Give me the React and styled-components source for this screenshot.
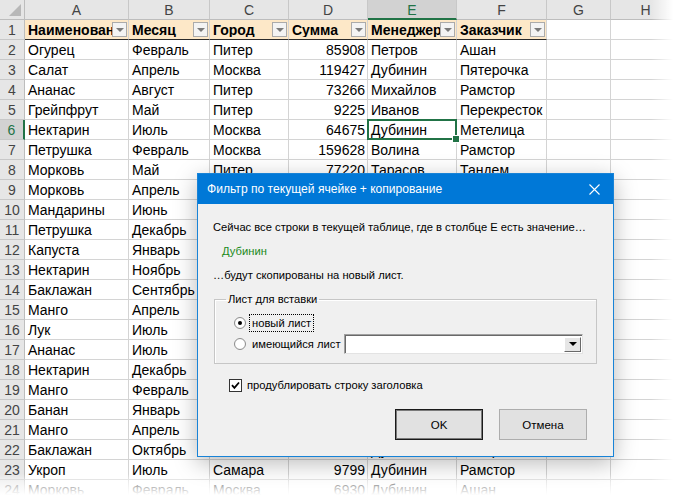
import React from 'react';
import styled, { createGlobalStyle, css } from 'styled-components';

const GlobalStyle = createGlobalStyle`
  html, body {
    margin: 0;
    padding: 0;
    background: #fff;
    overflow: hidden;
  }
`;

const COLS = [
  { key: 'A', width: 104 },
  { key: 'B', width: 81 },
  { key: 'C', width: 79 },
  { key: 'D', width: 79 },
  { key: 'E', width: 89 },
  { key: 'F', width: 90 },
  { key: 'G', width: 64 },
  { key: 'H', width: 70 },
];

const HEADERS = ['Наименование', 'Месяц', 'Город', 'Сумма', 'Менеджер', 'Заказчик'];

const ROWS = [
  ['Огурец', 'Февраль', 'Питер', 85908, 'Петров', 'Ашан'],
  ['Салат', 'Апрель', 'Москва', 119427, 'Дубинин', 'Пятерочка'],
  ['Ананас', 'Август', 'Питер', 73266, 'Михайлов', 'Рамстор'],
  ['Грейпфрут', 'Май', 'Питер', 9225, 'Иванов', 'Перекресток'],
  ['Нектарин', 'Июль', 'Москва', 64675, 'Дубинин', 'Метелица'],
  ['Петрушка', 'Февраль', 'Москва', 159628, 'Волина', 'Рамстор'],
  ['Морковь', 'Май', 'Питер', 77220, 'Тарасов', 'Тандем'],
  ['Морковь', 'Апрель', 'Москва', 43154, 'Иванов', 'Ашан'],
  ['Мандарины', 'Июнь', 'Самара', 91832, 'Петров', 'Рамстор'],
  ['Петрушка', 'Декабрь', 'Питер', 12045, 'Волина', 'Тандем'],
  ['Капуста', 'Январь', 'Москва', 66318, 'Дубинин', 'Ашан'],
  ['Нектарин', 'Ноябрь', 'Питер', 28711, 'Михайлов', 'Метелица'],
  ['Баклажан', 'Сентябрь', 'Самара', 5390, 'Тарасов', 'Пятерочка'],
  ['Манго', 'Апрель', 'Москва', 81276, 'Иванов', 'Рамстор'],
  ['Лук', 'Июль', 'Питер', 17734, 'Петров', 'Ашан'],
  ['Ананас', 'Июль', 'Москва', 54400, 'Дубинин', 'Тандем'],
  ['Нектарин', 'Декабрь', 'Самара', 38021, 'Волина', 'Перекресток'],
  ['Манго', 'Февраль', 'Питер', 7712, 'Михайлов', 'Метелица'],
  ['Банан', 'Январь', 'Москва', 99514, 'Тарасов', 'Ашан'],
  ['Манго', 'Апрель', 'Питер', 23650, 'Иванов', 'Рамстор'],
  ['Баклажан', 'Октябрь', 'Москва', 70088, 'Дубинин', 'Пятерочка'],
  ['Укроп', 'Июль', 'Самара', 9799, 'Дубинин', 'Рамстор'],
  ['Морковь', 'Февраль', 'Москва', 6930, 'Дубинин', 'Ашан'],
];

const ACTIVE_COL = 'E';
const ACTIVE_ROW = 6;

const Page = styled.div`
  position: relative;
  width: 677px;
  height: 496px;
  overflow: hidden;
  background: #fff;
`;

const Sheet = styled.div`
  display: grid;
  grid-template-columns: 25px ${COLS.map(c => `${c.width}px`).join(' ')};
  grid-auto-rows: 20px;
  font: 400 14px/1 'Liberation Sans', Arial, sans-serif;
  color: #000;
`;

const Corner = styled.div`
  position: relative;
  box-sizing: border-box;
  background: #e6e6e6;
  border-right: 1px solid #bdbdbd;
  border-bottom: 1px solid #bdbdbd;

  &::after {
    content: '';
    position: absolute;
    right: 3px;
    bottom: 3px;
    width: 0;
    height: 0;
    border-left: 12px solid transparent;
    border-bottom: 12px solid #b8b8b8;
  }
`;

const ColHead = styled.div`
  box-sizing: border-box;
  display: flex;
  align-items: center;
  justify-content: center;
  background: ${p => (p.active ? '#d2d2d2' : '#e6e6e6')};
  color: ${p => (p.active ? '#217346' : '#444')};
  border-right: 1px solid #c8c8c8;
  border-bottom: ${p => (p.active ? '2px solid #217346' : '1px solid #bdbdbd')};
  padding-top: ${p => (p.active ? '1px' : '0')};
`;

const RowHead = styled.div`
  box-sizing: border-box;
  display: flex;
  align-items: center;
  justify-content: center;
  background: ${p => (p.active ? '#d2d2d2' : '#e6e6e6')};
  color: ${p => (p.active ? '#217346' : '#444')};
  border-right: ${p => (p.active ? '2px solid #217346' : '1px solid #bdbdbd')};
  border-bottom: 1px solid #c8c8c8;
`;

const Cell = styled.div`
  position: relative;
  box-sizing: border-box;
  display: flex;
  align-items: flex-end;
  justify-content: ${p => (p.numeric ? 'flex-end' : 'flex-start')};
  padding: 0 2px 2px 3px;
  border-right: 1px solid #d4d4d4;
  border-bottom: 1px solid #d4d4d4;
  white-space: nowrap;
  overflow: ${p => (p.selected ? 'visible' : 'hidden')};

  ${p => p.header && css`
    background: #fde8c8;
    font-weight: 700;
    border-bottom: 1px solid #2b2b2b;
    align-items: center;
    padding: 0 1px 0 3px;
  `}

  ${p => p.selected && css`
    &::after {
      content: '';
      position: absolute;
      left: -1px;
      top: -1px;
      right: -1px;
      bottom: -1px;
      border: 2px solid #217346;
      z-index: 2;
    }
    &::before {
      content: '';
      position: absolute;
      right: -4px;
      bottom: -4px;
      width: 6px;
      height: 6px;
      background: #217346;
      border: 1px solid #fff;
      z-index: 3;
    }
  `}
`;

const HeaderLabel = styled.span`
  flex: 1;
  overflow: hidden;
  white-space: nowrap;
`;

const FilterButton = styled.span`
  flex: none;
  box-sizing: border-box;
  width: 15px;
  height: 15px;
  display: flex;
  align-items: center;
  justify-content: center;
  background: #f3f3f3;
  border: 1px solid #ababab;

  &::after {
    content: '';
    width: 0;
    height: 0;
    border-left: 4px solid transparent;
    border-right: 4px solid transparent;
    border-top: 4px solid #7a7a7a;
  }
`;

const FadeRight = styled.div`
  position: absolute;
  top: 0;
  right: 0;
  bottom: 0;
  width: 26px;
  background: linear-gradient(to right, rgba(255, 255, 255, 0), #fff 85%);
  pointer-events: none;
`;

const FadeBottom = styled.div`
  position: absolute;
  left: 0;
  right: 0;
  bottom: 0;
  height: 22px;
  background: linear-gradient(to bottom, rgba(255, 255, 255, 0), rgba(255, 255, 255, 0.55) 35%, #fff 95%);
  pointer-events: none;
`;

/* ---------- dialog ---------- */

const Dialog = styled.div`
  position: absolute;
  left: 197px;
  top: 173px;
  width: 417px;
  height: 284px;
  box-sizing: border-box;
  display: flex;
  flex-direction: column;
  background: #f0f0f0;
  border: 1px solid #1883d7;
  box-shadow: 0 6px 22px rgba(0, 0, 0, 0.28);
  font: 400 11.2px/14px 'Liberation Sans', Arial, sans-serif;
  color: #000;
  z-index: 5;
`;

const TitleBar = styled.div`
  flex: none;
  height: 30px;
  display: flex;
  align-items: center;
  justify-content: space-between;
  padding-left: 9px;
  background: #0078d7;
  color: #fff;
  font: 400 12.1px 'Liberation Sans', Arial, sans-serif;
`;

const CloseButton = styled.span`
  width: 38px;
  height: 30px;
  display: flex;
  align-items: center;
  justify-content: center;
`;

const Body = styled.div`
  flex: 1;
  display: flex;
  flex-direction: column;
  padding: 16px 16px 0 15px;
`;

const Line = styled.div`
  height: 14px;
  margin-bottom: 10px;
  padding-left: ${p => p.indent || 0}px;
  color: ${p => p.color || '#000'};
  white-space: nowrap;
`;

const Group = styled.fieldset`
  margin: 0 0 0 1px;
  padding: 6px 0 9px 0;
  border: 1px solid #c6c6c6;
  box-shadow: inset 1px 1px 0 #fff;
  height: 72px;
  box-sizing: border-box;
  display: flex;
  flex-direction: column;
`;

const Legend = styled.legend`
  padding: 0 2px;
  margin-left: 11px;
`;

const OptionRow = styled.div`
  height: 21px;
  display: flex;
  align-items: center;
  padding-left: 19px;
`;

const Radio = styled.span`
  flex: none;
  box-sizing: border-box;
  width: 12px;
  height: 12px;
  border-radius: 50%;
  border: 1px solid #8d8d8d;
  background: radial-gradient(circle, #fff 55%, #e6e6e6);
  display: flex;
  align-items: center;
  justify-content: center;
  margin-right: 3px;

  &::after {
    content: '';
    width: 4px;
    height: 4px;
    border-radius: 50%;
    background: ${p => (p.checked ? '#000' : 'transparent')};
  }
`;

const OptionText = styled.span`
  flex: none;
  white-space: nowrap;
  padding: 1px 2px;
  border: 1px dotted ${p => (p.focused ? '#000' : 'transparent')};
`;

const Combo = styled.div`
  flex: none;
  width: 239px;
  height: 20px;
  margin-left: auto;
  margin-right: 13px;
  box-sizing: border-box;
  display: flex;
  justify-content: flex-end;
  background: #fff;
  border: 1px solid #a0a0a0;
  border-right-color: #e3e3e3;
  border-bottom-color: #e3e3e3;
  box-shadow: inset 1px 1px 0 #696969;
  padding: 2px 1px 1px 0;
`;

const ComboButton = styled.span`
  width: 17px;
  box-sizing: border-box;
  display: flex;
  align-items: center;
  justify-content: center;
  background: #e6e6e6;
  border: 1px solid #fff;
  border-right-color: #696969;
  border-bottom-color: #696969;

  &::after {
    content: '';
    border-left: 4px solid transparent;
    border-right: 4px solid transparent;
    border-top: 4px solid #000;
  }
`;

const CheckRow = styled.div`
  display: flex;
  align-items: center;
  height: 14px;
  margin: 14px 0 0 16px;
`;

const CheckBox = styled.span`
  flex: none;
  box-sizing: border-box;
  width: 13px;
  height: 13px;
  margin-right: 5px;
  background: #fff;
  border: 1px solid #333;
  display: flex;
  align-items: center;
  justify-content: center;
`;

const Buttons = styled.div`
  display: flex;
  justify-content: flex-end;
  gap: 16px;
  margin-top: 17px;
  padding-right: 10px;
`;

const Button = styled.button`
  width: 88px;
  height: 31px;
  box-sizing: border-box;
  background: #e1e1e1;
  border: 1px solid ${p => (p.primary ? '#1a1a1a' : '#adadad')};
  box-shadow: ${p => (p.primary ? 'inset 0 0 0 1px #7a7a7a' : 'none')};
  font: 400 11.5px 'Liberation Sans', Arial, sans-serif;
  color: #000;
  padding: 0;
`;

const CloseIcon = () => (
  <svg width="11" height="11" viewBox="0 0 11 11">
    <path d="M0.5 0.5 L10.5 10.5 M10.5 0.5 L0.5 10.5" stroke="#fff" strokeWidth="1.1" fill="none" />
  </svg>
);

const CheckMark = () => (
  <svg width="9" height="9" viewBox="0 0 9 9">
    <path d="M1 4.2 L3.4 6.8 L8 1.5" stroke="#000" strokeWidth="1.8" fill="none" />
  </svg>
);

function FilterDialog() {
  return (
    <Dialog>
      <TitleBar>
        Фильтр по текущей ячейке + копирование
        <CloseButton><CloseIcon /></CloseButton>
      </TitleBar>
      <Body>
        <Line>Сейчас все строки в текущей таблице, где в столбце E есть значение…</Line>
        <Line indent={9} color="#1a8a1a">Дубинин</Line>
        <Line>…будут скопированы на новый лист.</Line>
        <Group>
          <Legend>Лист для вставки</Legend>
          <OptionRow>
            <Radio checked />
            <OptionText focused>новый лист</OptionText>
          </OptionRow>
          <OptionRow>
            <Radio />
            <OptionText>имеющийся лист</OptionText>
            <Combo><ComboButton /></Combo>
          </OptionRow>
        </Group>
        <CheckRow>
          <CheckBox><CheckMark /></CheckBox>
          продублировать строку заголовка
        </CheckRow>
        <Buttons>
          <Button primary>OK</Button>
          <Button>Отмена</Button>
        </Buttons>
      </Body>
    </Dialog>
  );
}

export default function App() {
  return (
    <Page>
      <GlobalStyle />
      <Sheet>
        <Corner />
        {COLS.map(c => (
          <ColHead key={c.key} active={c.key === ACTIVE_COL}>{c.key}</ColHead>
        ))}

        <RowHead>1</RowHead>
        {COLS.map((c, i) => (
          i < HEADERS.length ? (
            <Cell key={c.key} header>
              <HeaderLabel>{HEADERS[i]}</HeaderLabel>
              <FilterButton />
            </Cell>
          ) : <Cell key={c.key} />
        ))}

        {ROWS.map((row, r) => {
          const n = r + 2;
          return (
            <React.Fragment key={n}>
              <RowHead active={n === ACTIVE_ROW}>{n}</RowHead>
              {COLS.map((c, i) => (
                <Cell
                  key={c.key}
                  numeric={typeof row[i] === 'number'}
                  selected={n === ACTIVE_ROW && c.key === ACTIVE_COL}
                >
                  {row[i]}
                </Cell>
              ))}
            </React.Fragment>
          );
        })}
      </Sheet>
      <FilterDialog />
      <FadeRight />
      <FadeBottom />
    </Page>
  );
}
